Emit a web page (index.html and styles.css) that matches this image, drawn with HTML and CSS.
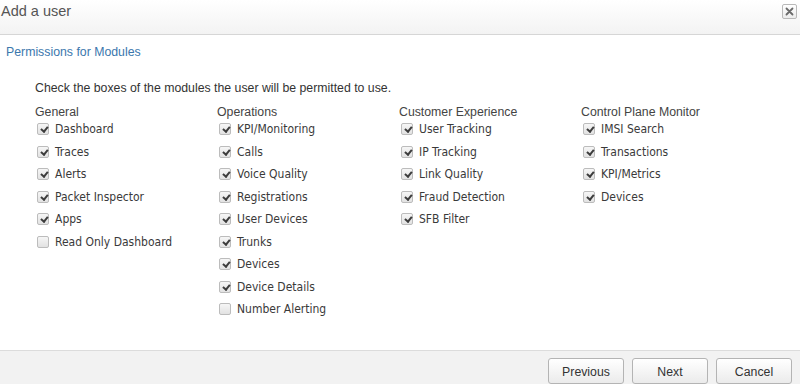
FILE: index.html
```html
<!DOCTYPE html>
<html>
<head>
<meta charset="utf-8">
<link rel="stylesheet" href="styles.css">
</head>
<body>
<div class="dialog">
  <div class="titlebar">
    <span class="title">Add a user</span>
    <span class="close"><svg width="13" height="13" viewBox="0 0 13 13"><path d="M3.5 3.5 L9.5 9.5 M9.5 3.5 L3.5 9.5" stroke="#6a6a6a" stroke-width="1.8" stroke-linecap="round"/></svg></span>
  </div>
  <div class="body">
    <div class="section-title">Permissions for Modules</div>
    <div class="content">
      <div class="intro">Check the boxes of the modules the user will be permitted to use.</div>
      <div class="columns">
        <div class="col">
          <div class="col-head">General</div>
          <label class="item"><span class="cb on"></span>Dashboard</label>
          <label class="item"><span class="cb on"></span>Traces</label>
          <label class="item"><span class="cb on"></span>Alerts</label>
          <label class="item"><span class="cb on"></span>Packet Inspector</label>
          <label class="item"><span class="cb on"></span>Apps</label>
          <label class="item"><span class="cb"></span>Read Only Dashboard</label>
        </div>
        <div class="col">
          <div class="col-head">Operations</div>
          <label class="item"><span class="cb on"></span>KPI/Monitoring</label>
          <label class="item"><span class="cb on"></span>Calls</label>
          <label class="item"><span class="cb on"></span>Voice Quality</label>
          <label class="item"><span class="cb on"></span>Registrations</label>
          <label class="item"><span class="cb on"></span>User Devices</label>
          <label class="item"><span class="cb on"></span>Trunks</label>
          <label class="item"><span class="cb on"></span>Devices</label>
          <label class="item"><span class="cb on"></span>Device Details</label>
          <label class="item"><span class="cb"></span>Number Alerting</label>
        </div>
        <div class="col">
          <div class="col-head">Customer Experience</div>
          <label class="item"><span class="cb on"></span>User Tracking</label>
          <label class="item"><span class="cb on"></span>IP Tracking</label>
          <label class="item"><span class="cb on"></span>Link Quality</label>
          <label class="item"><span class="cb on"></span>Fraud Detection</label>
          <label class="item"><span class="cb on"></span>SFB Filter</label>
        </div>
        <div class="col">
          <div class="col-head">Control Plane Monitor</div>
          <label class="item"><span class="cb on"></span>IMSI Search</label>
          <label class="item"><span class="cb on"></span>Transactions</label>
          <label class="item"><span class="cb on"></span>KPI/Metrics</label>
          <label class="item"><span class="cb on"></span>Devices</label>
        </div>
      </div>
    </div>
  </div>
  <div class="footer">
    <button class="btn">Previous</button>
    <button class="btn">Next</button>
    <button class="btn">Cancel</button>
  </div>
</div>
</body>
</html>
```
FILE: styles.css
```css
html, body {
  margin: 0;
  padding: 0;
  background: #ffffff;
}
body {
  font-family: "Liberation Sans", Arial, sans-serif;
  font-size: 12.3px;
  color: #333333;
}
.dialog {
  width: 800px;
  height: 384px;
  display: flex;
  flex-direction: column;
  overflow: hidden;
}
.titlebar {
  border-bottom: 1px solid #d6d6d6;
  background: linear-gradient(#ffffff, #f3f3f3);
  display: flex;
  justify-content: space-between;
  align-items: flex-start;
  padding: 2px 3px 0 1px;
  box-sizing: border-box;
  flex: none;
  height: 35px;
}
.title {
  font-size: 14.5px;
  line-height: 18px;
  color: #555555;
}
.close {
  width: 13px;
  height: 13px;
  margin-top: 2px;
  border: 1px solid #b9b9b9;
  border-radius: 2px;
  background: linear-gradient(#ffffff, #ececec);
  display: flex;
}
.body {
  flex: 1;
  padding-top: 9px;
}
.section-title {
  padding-left: 6px;
  line-height: 16px;
  color: #3b77ad;
}
.content {
  padding: 20px 0 0 35px;
}
.intro {
  line-height: 16px;
  color: #333333;
}
.columns {
  display: flex;
  margin-top: 8px;
}
.col {
  width: 182px;
  display: flex;
  flex-direction: column;
}
.col-head {
  line-height: 16px;
  color: #444444;
  margin-bottom: 1px;
}
.item {
  display: flex;
  align-items: center;
  height: 16px;
  margin-bottom: 6.5px;
  font-family: "DejaVu Sans Condensed", "DejaVu Sans", sans-serif;
  font-size: 12px;
  color: #3a3a3a;
}
.cb {
  width: 10px;
  height: 10px;
  border: 1px solid #bcbcbc;
  border-radius: 2px;
  background: linear-gradient(#f6f6f6, #e2e2e2);
  margin: 0 6px 0 2px;
  position: relative;
  flex: none;
}
.cb.on::after {
  content: "";
  position: absolute;
  left: 3.5px;
  top: 1px;
  width: 2.5px;
  height: 5px;
  border-right: 2px solid #3c3c3c;
  border-bottom: 2px solid #3c3c3c;
  transform: rotate(40deg);
}
.footer {
  flex: none;
  height: 34px;
  border-top: 1px solid #dcdcdc;
  background: #f2f2f2;
  box-sizing: border-box;
  display: flex;
  justify-content: flex-end;
  align-items: flex-start;
  gap: 8px;
  padding: 7px 8px 0 0;
}
.btn {
  width: 76px;
  height: 26px;
  border: 1px solid #b4b4b4;
  border-radius: 3px;
  background: linear-gradient(#ffffff, #ebebeb);
  font-family: "Liberation Sans", Arial, sans-serif;
  font-size: 12.3px;
  color: #333333;
  padding: 2px 0 0 0;
}
```
